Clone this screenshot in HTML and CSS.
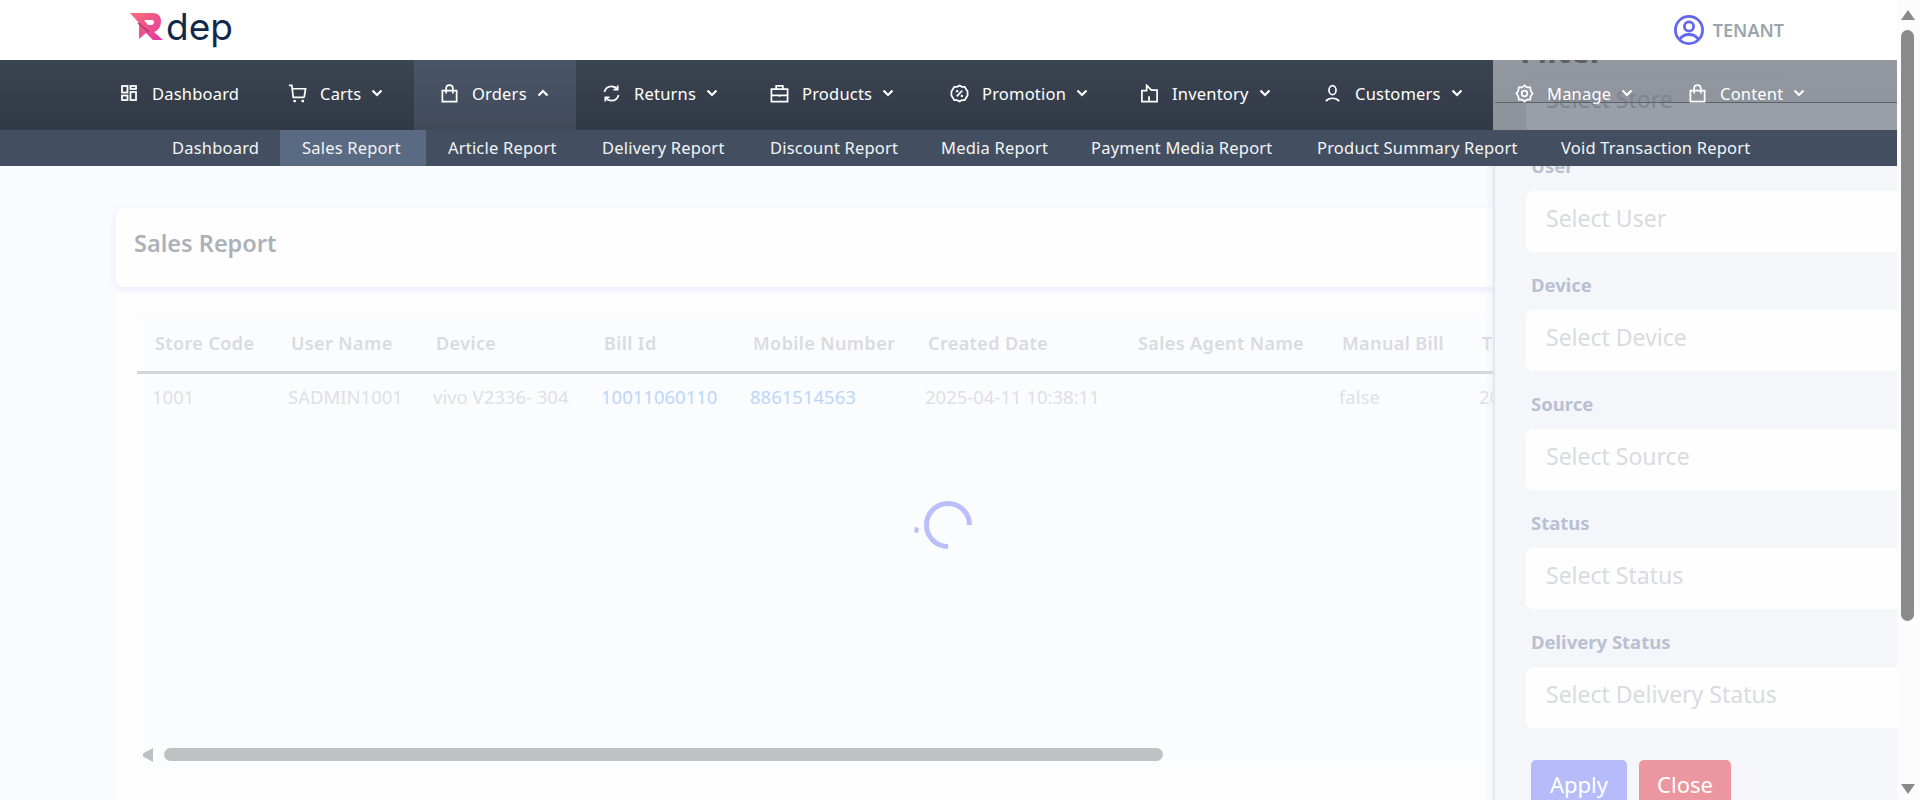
FILE: index.html
```html
<!DOCTYPE html>
<html lang="en">
<head>
<meta charset="utf-8">
<title>Sales Report</title>
<link rel="stylesheet" href="styles.css">
</head>
<body>
<div class="page">
  <div class="main">
    <header class="topbar">
      <div class="logo">
        <svg class="logo-mark" width="34" height="29" viewBox="0 0 34 29">
          <defs><linearGradient id="lg" x1="0" y1="0" x2="1" y2="1"><stop offset="0" stop-color="#f8707a"/><stop offset="1" stop-color="#e2379f"/></linearGradient></defs>
          <path fill="url(#lg)" d="M0 1H23C28 1 31 4 31 9C31 14 29 18 24 20L33 28H23L16 21L9 27V11Z"/>
          <path fill="#fff" d="M14 8H22C23.5 8 24 9 24 10C24 12 23 13 21 13H18Z"/>
          <path stroke="#a8386f" stroke-width="1.6" fill="none" d="M8 11L19 20"/>
        </svg>
        <span class="logo-text">dep</span>
      </div>
      <div class="user">
        <svg width="32" height="32" viewBox="0 0 32 32" fill="none" stroke="#6267f0" stroke-width="2.8"><circle cx="16" cy="16" r="13.6"/><circle cx="16" cy="12.5" r="4.6"/><path d="M6.5 25.5C9 21.5 12 20.5 16 20.5S23 21.5 25.5 25.5"/></svg>
        <span>TENANT</span>
      </div>
    </header>

    <nav class="mainnav">
      <a class="nav-item">
        <svg class="ic" viewBox="0 0 16 16"><rect x="1" y="1" width="5.500" height="6.500"/><rect x="9.500" y="1" width="5.500" height="3"/><rect x="1" y="10.500" width="5.500" height="4.500"/><rect x="9.500" y="7" width="5.500" height="8"/></svg>
        <span>Dashboard</span>
      </a>
      <a class="nav-item">
        <svg class="ic ic-lg" viewBox="0 0 20 20"><path d="M1 1.500H4L5.500 14H17M5 5H18.500L17 14"/><circle class="dot" cx="7" cy="18" r="1.500"/><circle class="dot" cx="15.500" cy="18" r="1.500"/></svg>
        <span>Carts</span>
        <svg class="chev" viewBox="0 0 12 8"><path d="M1.500 1.500L6 6L10.500 1.500"/></svg>
      </a>
      <a class="nav-item active">
        <svg class="ic ic-lg" viewBox="0 0 18 20"><path d="M1.500 7H16.500V18.500H1.500ZM5.500 10V4.500C5.500 2.500 7 1.200 9 1.200S12.500 2.500 12.500 4.500V10"/></svg>
        <span>Orders</span>
        <svg class="chev" viewBox="0 0 12 8"><path d="M1.500 6.500L6 2L10.500 6.500"/></svg>
      </a>
      <a class="nav-item">
        <svg class="ic ic-lg" viewBox="0 0 20 20"><path d="M2.500 8.500C3.500 5 6.500 2.500 10 2.500C12.500 2.500 14.500 3.500 16 5.500M17.500 11.500C16.500 15 13.500 17.500 10 17.500C7.500 17.500 5.500 16.500 4 14.500"/><path d="M16.500 1.500V6H12M3.500 18.500V14H8"/></svg>
        <span>Returns</span>
        <svg class="chev" viewBox="0 0 12 8"><path d="M1.500 1.500L6 6L10.500 1.500"/></svg>
      </a>
      <a class="nav-item">
        <svg class="ic ic-lg" viewBox="0 0 20 20"><path d="M1.500 5.500H18.500V18.500H1.500ZM1.500 12H18.500M6.500 5.500V2H13.500V5.500M10 11V13.500"/></svg>
        <span>Products</span>
        <svg class="chev" viewBox="0 0 12 8"><path d="M1.500 1.500L6 6L10.500 1.500"/></svg>
      </a>
      <a class="nav-item">
        <svg class="ic ic-lg" viewBox="0 0 20 20"><path d="M10 1.500L12.500 3H15.500L17 5.500L18.500 8V12L17 14.500L15.500 17H12.500L10 18.500L7.500 17H4.500L3 14.500L1.500 12V8L3 5.500L4.500 3H7.500Z"/><path d="M7 13L13 7"/><circle class="dot" cx="7.500" cy="7.500" r="1.300"/><circle class="dot" cx="12.500" cy="12.500" r="1.300"/></svg>
        <span>Promotion</span>
        <svg class="chev" viewBox="0 0 12 8"><path d="M1.500 1.500L6 6L10.500 1.500"/></svg>
      </a>
      <a class="nav-item">
        <svg class="ic ic-lg" viewBox="0 0 20 20"><path d="M2 18.500H18V6.500H12L7 1.500V7H2ZM9.500 13V18.500"/></svg>
        <span>Inventory</span>
        <svg class="chev" viewBox="0 0 12 8"><path d="M1.500 1.500L6 6L10.500 1.500"/></svg>
      </a>
      <a class="nav-item">
        <svg class="ic ic-lg" viewBox="0 0 20 20"><ellipse cx="10" cy="6.500" rx="3.700" ry="4.700"/><path d="M3 18C5 15.500 7.500 15 10 15S15 15.500 17 18"/></svg>
        <span>Customers</span>
        <svg class="chev" viewBox="0 0 12 8"><path d="M1.500 1.500L6 6L10.500 1.500"/></svg>
      </a>
      <a class="nav-item">
        <svg class="ic ic-lg" viewBox="0 0 20 20"><path d="M10 1.500L12.500 3.500L16 3.500L16.500 7L18.500 10L16.500 13L16 16.500L12.500 16.500L10 18.500L7.500 16.500L4 16.500L3.500 13L1.500 10L3.500 7L4 3.500L7.500 3.500Z"/><circle cx="10" cy="10" r="3"/></svg>
        <span>Manage</span>
        <svg class="chev" viewBox="0 0 12 8"><path d="M1.500 1.500L6 6L10.500 1.500"/></svg>
      </a>
      <a class="nav-item">
        <svg class="ic ic-lg" viewBox="0 0 18 20"><path d="M1.500 7H16.500V18.500H1.500ZM5.500 10V4.500C5.500 2.500 7 1.200 9 1.200S12.500 2.500 12.500 4.500V10"/></svg>
        <span>Content</span>
        <svg class="chev" viewBox="0 0 12 8"><path d="M1.500 1.500L6 6L10.500 1.500"/></svg>
      </a>
    </nav>

    <nav class="subnav">
      <a class="sub-item">Dashboard</a>
      <a class="sub-item active">Sales Report</a>
      <a class="sub-item">Article Report</a>
      <a class="sub-item">Delivery Report</a>
      <a class="sub-item">Discount Report</a>
      <a class="sub-item">Media Report</a>
      <a class="sub-item">Payment Media Report</a>
      <a class="sub-item">Product Summary Report</a>
      <a class="sub-item">Void Transaction Report</a>
    </nav>

    <main class="content">
      <section class="title-card"><h1>Sales Report</h1></section>
      <section class="table-card">
        <div class="table-area">
          <div class="table-scroll">
            <table>
              <thead>
                <tr>
                  <th class="c1">Store Code</th><th class="c2">User Name</th><th class="c3">Device</th><th class="c4">Bill Id</th><th class="c5">Mobile Number</th><th class="c6">Created Date</th><th class="c7">Sales Agent Name</th><th class="c8">Manual Bill</th><th class="c9">Transaction Date</th>
                </tr>
              </thead>
              <tbody>
                <tr>
                  <td>1001</td><td>SADMIN1001</td><td>vivo V2336- 304</td><td><a>10011060110</a></td><td><a>8861514563</a></td><td>2025-04-11 10:38:11</td><td></td><td>false</td><td>2025-04-11 10:38:11</td>
                </tr>
              </tbody>
            </table>
          </div>
          <div class="hscroll">
            <svg class="harrow" width="12" height="14" viewBox="0 0 12 14"><path d="M11 0V14L1 8.500V5.500Z"/></svg>
            <div class="hthumb"></div>
          </div>
          <svg class="spinner" width="60" height="48" viewBox="0 0 60 48" fill="none">
            <path d="M36 45.500A21.500 21.500 0 1 1 57.500 24" stroke="#babffa" stroke-width="5"/>
            <ellipse cx="4.500" cy="29" rx="2.200" ry="3" fill="#babffa"/>
          </svg>
        </div>
      </section>
    </main>

    <div class="filter-shadow"></div>
    <aside class="filter">
      <div class="filter-head"><h2>Filter</h2></div>
      <form class="filter-form">
        <div class="group">
          <label>Store</label>
          <div class="select first">Select Store</div>
        </div>
        <div class="group"><label>User</label><div class="select">Select User</div></div>
        <div class="group"><label>Device</label><div class="select">Select Device</div></div>
        <div class="group"><label>Source</label><div class="select">Select Source</div></div>
        <div class="group"><label>Status</label><div class="select">Select Status</div></div>
        <div class="group"><label>Delivery Status</label><div class="select">Select Delivery Status</div></div>
        <div class="actions">
          <button type="button" class="btn apply">Apply</button>
          <button type="button" class="btn close">Close</button>
        </div>
      </form>
    </aside>
  </div>

  <div class="vscroll">
    <svg class="varrow" width="14" height="12" viewBox="0 0 14 12"><path d="M7 1L14 11H0Z"/></svg>
    <div class="vthumb"></div>
    <svg class="varrow bottom" width="14" height="12" viewBox="0 0 14 12"><path d="M7 11L14 1H0Z"/></svg>
  </div>
</div>
</body>
</html>
```

FILE: styles.css
```css
* { box-sizing: border-box; }
html, body { margin: 0; padding: 0; height: 800px; overflow: hidden; }
body { font-family: "Noto Sans", "Open Sans", sans-serif; font-size: 15px; background: #fafbff; }

.page { display: flex; width: 1920px; height: 800px; }
.main { position: relative; width: 1897px; height: 800px; overflow: hidden; background: #fafbff; }

/* top bar */
.topbar { position: relative; z-index: 3; height: 60px; background: #fff; display: flex; align-items: center; justify-content: space-between; padding: 0 113px 0 130px; }
.logo { display: flex; align-items: flex-start; height: 60px; padding-top: 12px; }
.logo-mark { flex: none; }
.logo-text { font-family: "Inter", sans-serif; font-size: 37px; line-height: 38px; font-weight: 400; color: #13294b; margin-left: 2px; margin-top: -4px; }
.user { display: flex; align-items: center; gap: 8px; font-size: 18px; font-weight: 600; color: #9aa5ac; }

/* main nav: the bar stays under the filter panel, its links stay above */
.mainnav { height: 70px; padding-left: 95px; background: linear-gradient(#3b4451, #323946); display: grid; grid-template-columns: 167px 152px 162px 168px 180px 190px 183px 192px 173px 173px; }
.nav-item { position: relative; z-index: 3; display: flex; align-items: center; padding: 0 0 4px 26px; color: #fff; font-size: 16.500px; letter-spacing: 0.2px; white-space: nowrap; }
.nav-item.active { background: linear-gradient(#4a5567, #404a5b); }
.ic { width: 16px; height: 16px; margin-right: 15px; fill: none; stroke: #fff; stroke-width: 1.800; flex: none; }
.ic-lg { width: 19px; height: 19px; margin-right: 13px; }
.dot { fill: #fff; stroke: none; }
.chev { width: 12px; height: 8px; margin-left: 10px; fill: none; stroke: #fff; stroke-width: 2.200; flex: none; }

/* sub nav */
.subnav { position: relative; z-index: 3; height: 36px; padding-left: 150px; background: #434f60; display: grid; grid-template-columns: 130px 146px 154px 168px 171px 150px 226px 244px 232px; }
.sub-item { display: flex; align-items: center; padding: 0 0 2px 22px; color: #f3f4f6; font-size: 16.500px; letter-spacing: 0.2px; white-space: nowrap; }
.sub-item.active { background: #5a6a82; }

/* content */
.content { padding: 42px 0 0 113px; }
.title-card { margin-left: 3px; height: 79px; background: #fefeff; border-radius: 8px; box-shadow: 0 3px 8px rgba(120,130,230,.12); display: flex; align-items: center; padding: 0 0 10px 18px; }
.title-card h1 { margin: 0; font-size: 23.500px; font-weight: 600; color: #adb2b8; }
.table-card { margin-top: 6px; height: 520px; background: #fdfdfe; border-radius: 8px; padding: 24px 0 0 24px; }
.table-area { position: relative; height: 450px; background: #fbfcfd; display: flex; flex-direction: column; }
.table-scroll { flex: 1; overflow: hidden; }
table { border-collapse: collapse; table-layout: fixed; width: 1500px; }
th { height: 55px; padding: 0 0 2px 18px; text-align: left; font-size: 18px; font-weight: 600; letter-spacing: 0.4px; color: #d9dbe1; border-bottom: 3px solid #d4d5dc; white-space: nowrap; }
td { height: 50px; padding: 0 0 2px 15px; font-size: 18.500px; color: #dfe0e5; white-space: nowrap; }
td a { color: #bcd6fb; }
.c1 { width: 136px; } .c2 { width: 145px; } .c3 { width: 168px; } .c4 { width: 149px; } .c5 { width: 175px; } .c6 { width: 210px; } .c7 { width: 204px; } .c8 { width: 140px; } .c9 { width: 173px; }
.hscroll { height: 19px; display: flex; align-items: flex-start; padding-left: 5px; gap: 10px; }
.harrow { fill: #bfc0c2; flex: none; }
.hthumb { width: 999px; height: 13px; background: #c0c1c3; border-radius: 7px; }
.spinner { position: absolute; left: 775px; top: 184px; }

/* filter panel */
.filter-shadow { position: absolute; z-index: 2; top: 166px; bottom: 0; right: 404px; width: 8px; background: linear-gradient(to right, rgba(225,228,240,0), rgba(225,228,240,.35)); }
.filter { position: absolute; z-index: 2; top: 0; right: 0; width: 404px; height: 800px; overflow: hidden; background: linear-gradient(rgba(245,246,250,.47) 166px, #f5f6fa 166px); border-left: 2px solid; border-image: linear-gradient(transparent 166px, #e6e7ec 166px) 1; }
.filter-head { position: absolute; top: 0; left: 0; right: 0; height: 103px; border-bottom: 1px solid #5d6169; padding: 33px 0 0 25px; }
.filter-head h2 { margin: 0; font-size: 32px; line-height: 36px; font-weight: 700; color: #5e6066; }
.filter-form { padding: 35px 0 0 31px; }
.group { height: 119px; }
.group label { display: block; height: 24px; line-height: 24px; margin: 0 0 13px 5px; font-size: 18.500px; font-weight: 700; color: #b9c0d2; }
.select { width: calc(100% + 20px); height: 61px; line-height: 55px; padding-left: 20px; background: #fefeff; border-radius: 7px; font-size: 23px; color: #d9dbe0; }
.select.first { background: linear-gradient(transparent 31px, rgba(255,255,255,.1) 31px); color: #80848c; }
.actions { display: flex; gap: 12px; margin: 11px 0 0 5px; }
.btn { height: 52px; border: 0; border-radius: 5px; color: #fff; font: 400 22px "Noto Sans", sans-serif; padding: 0 0 4px; }
.apply { width: 96px; background: #b6bcf9; }
.close { width: 92px; background: #ec979f; }

/* page scrollbar */
.vscroll { width: 23px; height: 800px; background: #fcfcfc; display: flex; flex-direction: column; align-items: center; padding: 9px 2px 5px 0; }
.varrow { fill: #8a8a8a; flex: none; }
.vthumb { width: 13px; height: 591px; margin-top: 9px; background: #8a8a8a; border-radius: 7px; }
.varrow.bottom { margin-top: auto; }
```
